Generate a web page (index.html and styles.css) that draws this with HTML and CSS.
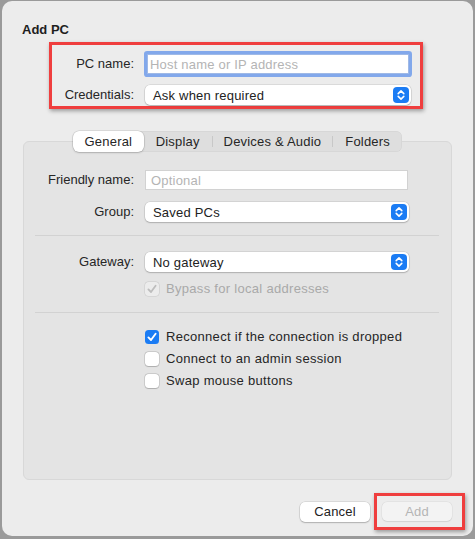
FILE: index.html
```html
<!DOCTYPE html>
<html>
<head>
<meta charset="utf-8">
<link rel="stylesheet" href="styles.css">
</head>
<body>
<div class="window">
  <div class="title">Add PC</div>

  <div class="highlight top-box">
    <div class="top-grid">
      <label class="lbl">PC name:</label>
      <div class="field focus"><span class="ph">Host name or IP address</span></div>
      <label class="lbl">Credentials:</label>
      <div class="select"><span>Ask when required</span>
        <svg class="stepper" viewBox="0 0 16 16"><rect width="16" height="16" rx="4" fill="#1b7cf4"/><path d="M5.2 6.6 L8 3.9 L10.8 6.6 M5.2 9.4 L8 12.1 L10.8 9.4" fill="none" stroke="#fff" stroke-width="1.6" stroke-linecap="round" stroke-linejoin="round"/></svg>
      </div>
    </div>
  </div>

  <div class="panel">
    <div class="segmented">
      <div class="seg selected seg-general">General</div>
      <div class="seg seg-display">Display</div>
      <div class="seg-sep"></div>
      <div class="seg seg-devices">Devices &amp; Audio</div>
      <div class="seg-sep"></div>
      <div class="seg seg-folders">Folders</div>
    </div>

    <div class="row r-friendly">
      <label class="plbl">Friendly name:</label>
      <div class="field plain"><span class="ph">Optional</span></div>
    </div>
    <div class="row r-group">
      <label class="plbl">Group:</label>
      <div class="select wide"><span>Saved PCs</span>
        <svg class="stepper" viewBox="0 0 16 16"><rect width="16" height="16" rx="4" fill="#1b7cf4"/><path d="M5.2 6.6 L8 3.9 L10.8 6.6 M5.2 9.4 L8 12.1 L10.8 9.4" fill="none" stroke="#fff" stroke-width="1.6" stroke-linecap="round" stroke-linejoin="round"/></svg>
      </div>
    </div>
    <div class="sep sep1"></div>
    <div class="row r-gateway">
      <label class="plbl">Gateway:</label>
      <div class="select wide"><span>No gateway</span>
        <svg class="stepper" viewBox="0 0 16 16"><rect width="16" height="16" rx="4" fill="#1b7cf4"/><path d="M5.2 6.6 L8 3.9 L10.8 6.6 M5.2 9.4 L8 12.1 L10.8 9.4" fill="none" stroke="#fff" stroke-width="1.6" stroke-linecap="round" stroke-linejoin="round"/></svg>
      </div>
    </div>
    <div class="check-row r-bypass disabled">
      <span class="cb cb-disabled"><svg viewBox="0 0 14 14"><path d="M3.4 7.4 L6 10 L10.6 3.8" fill="none" stroke="#bdbdbd" stroke-width="1.8" stroke-linecap="round" stroke-linejoin="round"/></svg></span>
      <span class="ctext">Bypass for local addresses</span>
    </div>
    <div class="sep sep2"></div>
    <div class="check-row r-reconnect">
      <span class="cb cb-on"><svg viewBox="0 0 14 14"><path d="M3.4 7.4 L6 10 L10.6 3.8" fill="none" stroke="#fff" stroke-width="1.9" stroke-linecap="round" stroke-linejoin="round"/></svg></span>
      <span class="ctext">Reconnect if the connection is dropped</span>
    </div>
    <div class="check-row r-next">
      <span class="cb"></span>
      <span class="ctext">Connect to an admin session</span>
    </div>
    <div class="check-row r-next">
      <span class="cb"></span>
      <span class="ctext">Swap mouse buttons</span>
    </div>
  </div>

  <div class="footer">
    <button class="btn cancel">Cancel</button>
    <div class="highlight add-box">
      <button class="btn add">Add</button>
    </div>
  </div>
</div>
</body>
</html>
```

FILE: styles.css
```css
* { box-sizing: border-box; }

html, body {
  margin: 0;
  padding: 0;
}

body {
  width: 475px;
  height: 539px;
  background: #9a9a9a;
  font-family: "Liberation Sans", Arial, sans-serif;
  font-size: 13px;
  color: #262626;
  overflow: hidden;
  padding: 1px 2px 0 2px;
}

.window {
  width: 471px;
  height: 535px;
  background: #ececec;
  border-radius: 10px;
  padding: 21px 0 0 0;
  display: flex;
  flex-direction: column;
}

.title {
  font-weight: bold;
  font-size: 13px;
  line-height: 16px;
  margin-left: 20px;
  color: #1e1e1e;
}

.highlight {
  border: 3px solid #ef3e3e;
  box-shadow: 1px 2px 4px rgba(0, 0, 0, 0.35);
}

.top-box {
  margin-top: 4px;
  margin-left: 47px;
  width: 374px;
  height: 67px;
  padding: 9px 9px 0 0;
}

.top-grid {
  display: grid;
  grid-template-columns: 82px 266px;
  grid-template-rows: 20px 20px;
  column-gap: 11px;
  row-gap: 11px;
  align-items: center;
}

.lbl, .plbl {
  text-align: right;
  line-height: 16px;
  color: #262626;
}

.field {
  height: 20px;
  background: #fff;
  display: flex;
  align-items: center;
  padding-left: 5px;
}

.field.focus {
  border: 1px solid #9fb9e6;
  box-shadow: 0 0 0 3px rgba(95, 145, 235, 0.75);
  border-radius: 1px;
  height: 20px;
  margin: 0 2px 0 2px;
  padding-left: 2px;
}

.field.plain {
  border: 1px solid #d2d2d2;
  width: 263px;
}

.ph {
  color: #b4b4b4;
  letter-spacing: 0.2px;
}

.select {
  position: relative;
  height: 20px;
  background: #fff;
  border-radius: 5px;
  box-shadow: 0 0 0 0.5px rgba(0, 0, 0, 0.14), 0 1px 1.5px rgba(0, 0, 0, 0.18);
  display: flex;
  align-items: center;
  padding-left: 8px;
  color: #222;
  letter-spacing: 0.2px;
}

.select.wide {
  width: 264px;
}

.stepper {
  position: absolute;
  right: 2px;
  top: 2px;
  width: 16px;
  height: 16px;
}

.panel {
  margin-top: 32px;
  margin-left: 21px;
  width: 429px;
  height: 339px;
  background: #e4e4e4;
  border: 1px solid #d8d8d8;
  border-radius: 6px;
  display: flex;
  flex-direction: column;
}

.segmented {
  margin-top: -11px;
  align-self: center;
  width: 329px;
  height: 21px;
  background: #dedede;
  border-radius: 6px;
  display: flex;
  align-items: center;
  box-shadow: inset 0 0 0 0.5px rgba(0, 0, 0, 0.06);
}

.seg {
  height: 21px;
  line-height: 21px;
  text-align: center;
  color: #262626;
  letter-spacing: 0.2px;
}

.seg.selected {
  background: #fff;
  border-radius: 6px;
  box-shadow: 0 0 0 0.5px rgba(0, 0, 0, 0.15), 0 1px 2px rgba(0, 0, 0, 0.18);
}

.seg-general { width: 71px; }
.seg-display { width: 68px; }
.seg-devices { width: 120px; }
.seg-folders { width: 69px; }

.seg-sep {
  width: 1px;
  height: 11px;
  background: #c8c8c8;
}

.row {
  display: flex;
  align-items: center;
  height: 20px;
  gap: 11px;
}

.plbl {
  width: 110px;
}

.r-friendly { margin-top: 18px; }
.r-group { margin-top: 12px; }
.r-gateway { margin-top: 16px; }

.sep {
  height: 1px;
  background: #d2d2d2;
  margin-left: 11px;
  margin-right: 12px;
}

.sep1 { margin-top: 13px; }
.sep2 { margin-top: 16px; }

.check-row {
  display: flex;
  align-items: center;
  height: 14px;
  padding-left: 121px;
  gap: 7px;
}

.r-bypass { margin-top: 10px; }
.r-reconnect { margin-top: 17px; }
.r-next { margin-top: 8px; }

.cb {
  width: 14px;
  height: 14px;
  border-radius: 3.5px;
  background: #fff;
  box-shadow: 0 0 0 0.5px rgba(0, 0, 0, 0.2), 0 0.5px 1px rgba(0, 0, 0, 0.15);
  display: flex;
}

.cb svg {
  width: 14px;
  height: 14px;
}

.cb-on {
  background: #1b7cf4;
  box-shadow: none;
}

.cb-disabled {
  background: #ececec;
  box-shadow: 0 0 0 0.5px rgba(0, 0, 0, 0.12);
}

.ctext {
  line-height: 16px;
  color: #262626;
  letter-spacing: 0.3px;
}

.disabled .ctext {
  color: #a9a9a9;
}

.footer {
  margin-top: 13px;
  display: flex;
  justify-content: flex-end;
  align-items: center;
  gap: 4px;
  padding-right: 8px;
}

.btn {
  font-family: "Liberation Sans", Arial, sans-serif;
  font-size: 13px;
  border: none;
  border-radius: 5px;
  width: 70px;
  padding: 0;
  letter-spacing: 0.2px;
}

.cancel {
  height: 20px;
  background: #fff;
  color: #222;
  box-shadow: 0 0 0 0.5px rgba(0, 0, 0, 0.15), 0 1px 1.5px rgba(0, 0, 0, 0.2);
}

.add-box {
  width: 91px;
  height: 37px;
  padding: 6px 0 0 5px;
}

.add {
  height: 19px;
  background: #f3f3f3;
  color: #b5b5b5;
  box-shadow: 0 0 0 0.5px rgba(0, 0, 0, 0.06), 0 0.5px 1px rgba(0, 0, 0, 0.08);
}
```
